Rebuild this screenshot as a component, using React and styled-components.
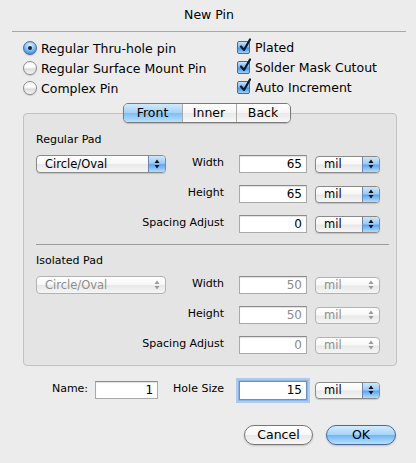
import React from 'react';
import styled, { createGlobalStyle, css } from 'styled-components';

const GlobalStyle = createGlobalStyle`
  html, body {
    margin: 0;
    padding: 0;
    background: #ececec;
  }
  body {
    font-family: "DejaVu Sans", "Liberation Sans", sans-serif;
    color: #000;
  }
`;

const Dialog = styled.div`
  width: 416px;
  height: 463px;
  background: #ececec;
  display: flex;
  flex-direction: column;
  overflow: hidden;
`;

const Title = styled.div`
  height: 31px;
  line-height: 30px;
  margin: 0 10px 0 12px;
  border-bottom: 1px solid #a8a8a8;
  text-align: center;
  font-size: 12.5px;
`;

const Options = styled.div`
  display: grid;
  grid-template-columns: 214px 1fr;
  grid-auto-rows: 20px;
  padding: 6px 0 0 23px;
`;

const Choice = styled.label`
  display: flex;
  align-items: center;
  gap: ${p => (p.$check ? '5px' : '4px')};
  font-size: 12.5px;
  white-space: nowrap;
  margin-top: ${p => (p.$check ? '-1px' : '0')};
`;

const Radio = styled.span`
  width: 14px;
  height: 14px;
  box-sizing: border-box;
  border-radius: 50%;
  border: 1px solid ${p => (p.$on ? '#4a6b9e' : '#8c8c8c')};
  display: flex;
  align-items: center;
  justify-content: center;
  flex: none;
  background: ${p =>
    p.$on
      ? 'radial-gradient(circle at 50% 30%, #e4f2ff 0%, #8cc4f4 45%, #3f8fe0 80%, #7fc0f8 100%)'
      : 'linear-gradient(#f4f4f4, #ffffff 40%, #dcdcdc 60%, #f6f6f6)'};
  box-shadow: 0 1px 1px rgba(0, 0, 0, 0.15);

  &::after {
    content: '';
    display: ${p => (p.$on ? 'block' : 'none')};
    width: 4px;
    height: 4px;
    border-radius: 50%;
    background: #10243e;
  }
`;

const Check = styled.span`
  width: 13px;
  height: 13px;
  box-sizing: border-box;
  border: 1px solid #4a6a9a;
  border-radius: 2px;
  background: linear-gradient(#c6e2fb, #7ab8f0 45%, #4a96e4 55%, #9ad0fb);
  position: relative;
  flex: none;

  svg {
    position: absolute;
    left: 1px;
    top: -4px;
  }
`;

const Box = styled.div`
  margin: 15px 0 0 23px;
  width: 374px;
  box-sizing: border-box;
  border: 1px solid #c2c2c2;
  border-radius: 4px;
  background: #e4e4e4;
  padding: 0 15px 11px 12px;
  display: flex;
  flex-direction: column;
`;

const Tabs = styled.div`
  align-self: center;
  margin: -11px 0 0 -4px;
  display: flex;
  height: 20px;
  box-sizing: border-box;
  border: 1px solid #7a7a7a;
  border-radius: 5px;
  overflow: hidden;
  box-shadow: 0 1px 1px rgba(0, 0, 0, 0.18);
`;

const Tab = styled.div`
  width: ${p => p.$w}px;
  box-sizing: border-box;
  font-size: 12.5px;
  line-height: 18px;
  text-align: center;
  border-left: ${p => (p.$first ? 'none' : '1px solid #a9a9a9')};
  background: ${p =>
    p.$on
      ? 'linear-gradient(#d2e9fc, #a5d2f7 48%, #7fbff4 52%, #b8e0fd)'
      : 'linear-gradient(#ffffff, #f6f6f6 48%, #e9e9e9 52%, #f8f8f8)'};
`;

const SectionLabel = styled.div`
  font-size: 11px;
  line-height: 14px;
  margin-top: ${p => p.$top}px;
  margin-bottom: 8px;
`;

const Fields = styled.div`
  display: grid;
  grid-template-columns: 130px 57px 68px 65px;
  grid-auto-rows: 18px;
  column-gap: 8px;
  row-gap: 12px;
  align-items: center;
`;

const FieldLabel = styled.div`
  grid-column: ${p => (p.$wide ? '1 / 3' : '2')};
  text-align: right;
  padding-right: 7px;
  font-size: 11px;
  white-space: nowrap;
  margin-top: -3px;
`;

const TextField = styled.div`
  width: ${p => p.$w || 68}px;
  height: 18px;
  box-sizing: border-box;
  background: #fff;
  border: 1px solid #a9a9a9;
  border-top-color: #8a8a8a;
  box-shadow: inset 0 1px 1px rgba(0, 0, 0, 0.12);
  font-size: 12px;
  line-height: 17px;
  text-align: right;
  padding-right: 4px;
  color: ${p => (p.$off ? '#8a8a8a' : '#000')};
  ${p =>
    p.$focus &&
    css`
      border-color: #6b8fc0;
      box-shadow: 0 0 0 1px #8fb6e6, 0 0 0 3px #aecbee;
      height: 19px;
    `}
`;

const PopUp = styled.div`
  width: ${p => p.$w}px;
  height: ${p => p.$h || 17}px;
  box-sizing: border-box;
  display: flex;
  border: 1px solid ${p => (p.$off ? '#b2b2b2' : '#8a8a8a')};
  border-radius: 4px;
  overflow: hidden;
  background: linear-gradient(#ffffff, #f7f7f7 48%, #e8e8e8 52%, #f5f5f5);
  box-shadow: ${p => (p.$off ? 'none' : '0 1px 1px rgba(0, 0, 0, 0.15)')};
  font-size: 11.5px;
  color: ${p => (p.$off ? '#8e8e8e' : '#000')};
`;

const PopText = styled.span`
  flex: 1;
  padding-left: 8px;
  line-height: ${p => (p.$h || 17) - 2}px;
  white-space: nowrap;
`;

const PopArrow = styled.span`
  width: 16px;
  display: flex;
  align-items: center;
  justify-content: center;
  border-left: 1px solid ${p => (p.$off ? 'transparent' : '#6f84b4')};
  background: ${p =>
    p.$off
      ? 'transparent'
      : 'linear-gradient(#cfe6fb, #9ccbf4 45%, #5ea7ec 55%, #b3dcfd)'};
`;

const BottomRow = styled.div`
  margin-top: 14px;
  padding-right: 36px;
  display: flex;
  justify-content: flex-end;
  align-items: center;
  height: 20px;
`;

const InlineLabel = styled.span`
  font-size: 11px;
  margin: -3px ${p => p.$gap}px 0 0;
`;

const Spacer = styled.span`
  width: ${p => p.$w}px;
  flex: none;
`;

const Buttons = styled.div`
  margin-top: 25px;
  padding-right: 20px;
  display: flex;
  justify-content: flex-end;
  gap: 13px;
`;

const Button = styled.div`
  width: ${p => p.$w}px;
  height: 20px;
  box-sizing: border-box;
  border-radius: 10px;
  border: 1px solid ${p => (p.$default ? '#4e679a' : '#777')};
  text-align: center;
  font-size: 12.5px;
  line-height: 18px;
  box-shadow: 0 1px 2px rgba(0, 0, 0, 0.2);
  background: ${p =>
    p.$default
      ? 'linear-gradient(#d4ebfd, #a6d4f8 48%, #6fb7f2 52%, #b7e2ff)'
      : 'linear-gradient(#ffffff, #f7f7f7 48%, #e8e8e8 52%, #f7f7f7)'};
`;

const Divider = styled.div`
  height: 1px;
  background: #9c9c9c;
  margin: 11px -8px 0 0;
`;

const CheckMark = () => (
  <svg width="12" height="14" viewBox="0 0 12 14">
    <path d="M2 8.5 L5 12 L11 1.5" fill="none" stroke="#0d1b2e" strokeWidth="2.2" strokeLinecap="round" strokeLinejoin="round" />
  </svg>
);

const Arrows = ({ off }) => (
  <svg width="6" height="10" viewBox="0 0 6 10">
    <path d="M3 0.5 L5.5 4 L0.5 4 Z M3 9.5 L5.5 6 L0.5 6 Z" fill={off ? '#9a9a9a' : '#111'} />
  </svg>
);

const Select = ({ value, w, h, off }) => (
  <PopUp $w={w} $h={h} $off={off}>
    <PopText $h={h}>{value}</PopText>
    <PopArrow $off={off}>
      <Arrows off={off} />
    </PopArrow>
  </PopUp>
);

const PadFields = ({ off, width, height, spacing }) => (
  <Fields>
    <Select value="Circle/Oval" w={130} h={18} off={off} />
    <FieldLabel>Width</FieldLabel>
    <TextField $off={off}>{width}</TextField>
    <Select value="mil" w={65} off={off} />

    <FieldLabel $wide>Height</FieldLabel>
    <TextField $off={off}>{height}</TextField>
    <Select value="mil" w={65} off={off} />

    <FieldLabel $wide>Spacing Adjust</FieldLabel>
    <TextField $off={off}>{spacing}</TextField>
    <Select value="mil" w={65} off={off} />
  </Fields>
);

export default function App() {
  return (
    <>
      <GlobalStyle />
      <Dialog>
        <Title>New Pin</Title>
        <Options>
          <Choice><Radio $on />Regular Thru-hole pin</Choice>
          <Choice $check><Check><CheckMark /></Check>Plated</Choice>
          <Choice><Radio />Regular Surface Mount Pin</Choice>
          <Choice $check><Check><CheckMark /></Check>Solder Mask Cutout</Choice>
          <Choice><Radio />Complex Pin</Choice>
          <Choice $check><Check><CheckMark /></Check>Auto Increment</Choice>
        </Options>

        <Box>
          <Tabs>
            <Tab $w={58} $first $on>Front</Tab>
            <Tab $w={54}>Inner</Tab>
            <Tab $w={54}>Back</Tab>
          </Tabs>
          <SectionLabel $top={10}>Regular Pad</SectionLabel>
          <PadFields width="65" height="65" spacing="0" />
          <Divider />
          <SectionLabel $top={9}>Isolated Pad</SectionLabel>
          <PadFields off width="50" height="50" spacing="0" />
        </Box>

        <BottomRow>
          <InlineLabel $gap={7}>Name:</InlineLabel>
          <TextField $w={63}>1</TextField>
          <Spacer $w={15} />
          <InlineLabel $gap={15}>Hole Size</InlineLabel>
          <TextField $focus>15</TextField>
          <Spacer $w={8} />
          <Select value="mil" w={65} />
        </BottomRow>

        <Buttons>
          <Button $w={69}>Cancel</Button>
          <Button $w={70} $default>OK</Button>
        </Buttons>
      </Dialog>
    </>
  );
}
